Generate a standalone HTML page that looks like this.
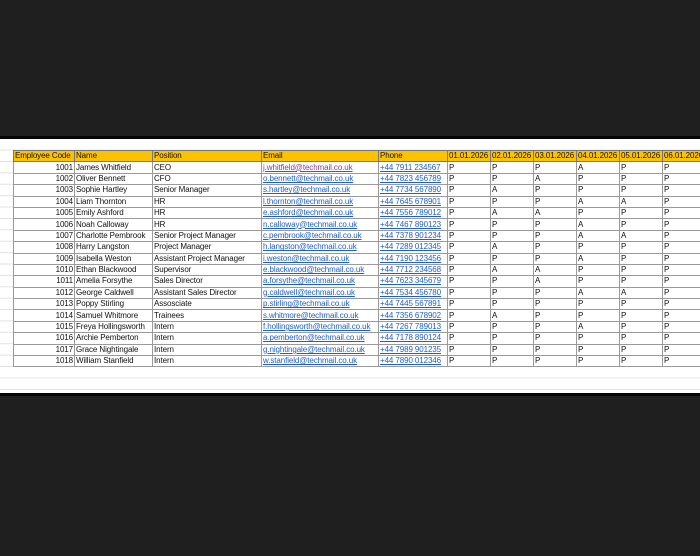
<!DOCTYPE html><html><head><style>
body{margin:0;width:700px;height:556px;background:#1f1f1f;position:relative;overflow:hidden;font-family:"Liberation Sans",sans-serif}
#sheet{position:absolute;left:0;top:139px;width:700px;height:254px;background:#fff;overflow:hidden;
background-image:linear-gradient(#e2e2e2 1px,transparent 1px);background-size:100% 11.4px;background-position:0 10.6px}
.topline{position:absolute;left:0;top:136px;width:700px;height:3px;background:#050505}
.botline{position:absolute;left:0;top:393px;width:700px;height:3px;background:#050505}
table{position:absolute;left:13px;top:11px;width:692px;border-collapse:collapse;table-layout:fixed;font-size:8px;letter-spacing:-0.1px;color:#111}
td{height:10.4px;padding:0 1px;border:1px solid #9a9a9a;white-space:nowrap;overflow:hidden;line-height:10px;background:#fff}
tr.h td{background:#fcc200;border-color:#777}
td.n{text-align:right}
td.l{color:#1f5fc9;text-decoration:underline}
td.v{color:#8a3c8c;text-decoration:underline}
tr.g td:first-child{border-top:1px solid #333}
</style></head><body>
<div class="topline"></div>
<div id="sheet">
<table>
<colgroup><col style="width:61px"><col style="width:78px"><col style="width:109px"><col style="width:117px"><col style="width:69px"><col style="width:43px"><col style="width:43px"><col style="width:43px"><col style="width:43px"><col style="width:43px"><col style="width:43px"></colgroup>
<tr class="h"><td>Employee Code</td><td>Name</td><td>Position</td><td>Email</td><td>Phone</td><td>01.01.2026</td><td>02.01.2026</td><td>03.01.2026</td><td>04.01.2026</td><td>05.01.2026</td><td>06.01.2026</td></tr>
<tr><td class="n">1001</td><td>James Whitfield</td><td>CEO</td><td class="v">j.whitfield@techmail.co.uk</td><td class="l">+44 7911 234567</td><td>P</td><td>P</td><td>P</td><td>A</td><td>P</td><td>P</td></tr>
<tr><td class="n">1002</td><td>Oliver Bennett</td><td>CFO</td><td class="l">o.bennett@techmail.co.uk</td><td class="l">+44 7823 456789</td><td>P</td><td>P</td><td>A</td><td>P</td><td>P</td><td>P</td></tr>
<tr><td class="n">1003</td><td>Sophie Hartley</td><td>Senior Manager</td><td class="l">s.hartley@techmail.co.uk</td><td class="l">+44 7734 567890</td><td>P</td><td>A</td><td>P</td><td>P</td><td>P</td><td>P</td></tr>
<tr class="g"><td class="n">1004</td><td>Liam Thornton</td><td>HR</td><td class="l">l.thornton@techmail.co.uk</td><td class="l">+44 7645 678901</td><td>P</td><td>P</td><td>P</td><td>A</td><td>A</td><td>P</td></tr>
<tr><td class="n">1005</td><td>Emily Ashford</td><td>HR</td><td class="l">e.ashford@techmail.co.uk</td><td class="l">+44 7556 789012</td><td>P</td><td>A</td><td>A</td><td>P</td><td>P</td><td>P</td></tr>
<tr><td class="n">1006</td><td>Noah Calloway</td><td>HR</td><td class="l">n.calloway@techmail.co.uk</td><td class="l">+44 7467 890123</td><td>P</td><td>P</td><td>P</td><td>A</td><td>P</td><td>P</td></tr>
<tr class="g"><td class="n">1007</td><td>Charlotte Pembrook</td><td>Senior Project Manager</td><td class="l">c.pembrook@techmail.co.uk</td><td class="l">+44 7378 901234</td><td>P</td><td>P</td><td>P</td><td>A</td><td>A</td><td>P</td></tr>
<tr><td class="n">1008</td><td>Harry Langston</td><td>Project Manager</td><td class="l">h.langston@techmail.co.uk</td><td class="l">+44 7289 012345</td><td>P</td><td>A</td><td>P</td><td>P</td><td>P</td><td>P</td></tr>
<tr><td class="n">1009</td><td>Isabella Weston</td><td>Assistant Project Manager</td><td class="l">i.weston@techmail.co.uk</td><td class="l">+44 7190 123456</td><td>P</td><td>P</td><td>P</td><td>A</td><td>P</td><td>P</td></tr>
<tr class="g"><td class="n">1010</td><td>Ethan Blackwood</td><td>Supervisor</td><td class="l">e.blackwood@techmail.co.uk</td><td class="l">+44 7712 234568</td><td>P</td><td>A</td><td>A</td><td>P</td><td>P</td><td>P</td></tr>
<tr><td class="n">1011</td><td>Amelia Forsythe</td><td>Sales Director</td><td class="l">a.forsythe@techmail.co.uk</td><td class="l">+44 7623 345679</td><td>P</td><td>P</td><td>A</td><td>P</td><td>P</td><td>P</td></tr>
<tr><td class="n">1012</td><td>George Caldwell</td><td>Assistant Sales Director</td><td class="l">g.caldwell@techmail.co.uk</td><td class="l">+44 7534 456780</td><td>P</td><td>P</td><td>P</td><td>A</td><td>A</td><td>P</td></tr>
<tr class="g"><td class="n">1013</td><td>Poppy Stirling</td><td>Assosciate</td><td class="l">p.stirling@techmail.co.uk</td><td class="l">+44 7445 567891</td><td>P</td><td>P</td><td>P</td><td>P</td><td>P</td><td>P</td></tr>
<tr><td class="n">1014</td><td>Samuel Whitmore</td><td>Trainees</td><td class="l">s.whitmore@techmail.co.uk</td><td class="l">+44 7356 678902</td><td>P</td><td>A</td><td>P</td><td>P</td><td>P</td><td>P</td></tr>
<tr><td class="n">1015</td><td>Freya Hollingsworth</td><td>Intern</td><td class="l">f.hollingsworth@techmail.co.uk</td><td class="l">+44 7267 789013</td><td>P</td><td>P</td><td>P</td><td>A</td><td>P</td><td>P</td></tr>
<tr class="g"><td class="n">1016</td><td>Archie Pemberton</td><td>Intern</td><td class="l">a.pemberton@techmail.co.uk</td><td class="l">+44 7178 890124</td><td>P</td><td>P</td><td>P</td><td>P</td><td>P</td><td>P</td></tr>
<tr><td class="n">1017</td><td>Grace Nightingale</td><td>Intern</td><td class="l">g.nightingale@techmail.co.uk</td><td class="l">+44 7989 901235</td><td>P</td><td>P</td><td>P</td><td>P</td><td>P</td><td>P</td></tr>
<tr><td class="n">1018</td><td>William Stanfield</td><td>Intern</td><td class="l">w.stanfield@techmail.co.uk</td><td class="l">+44 7890 012346</td><td>P</td><td>P</td><td>P</td><td>P</td><td>P</td><td>P</td></tr>
</table>
</div>
<div class="botline"></div>
</body></html>
